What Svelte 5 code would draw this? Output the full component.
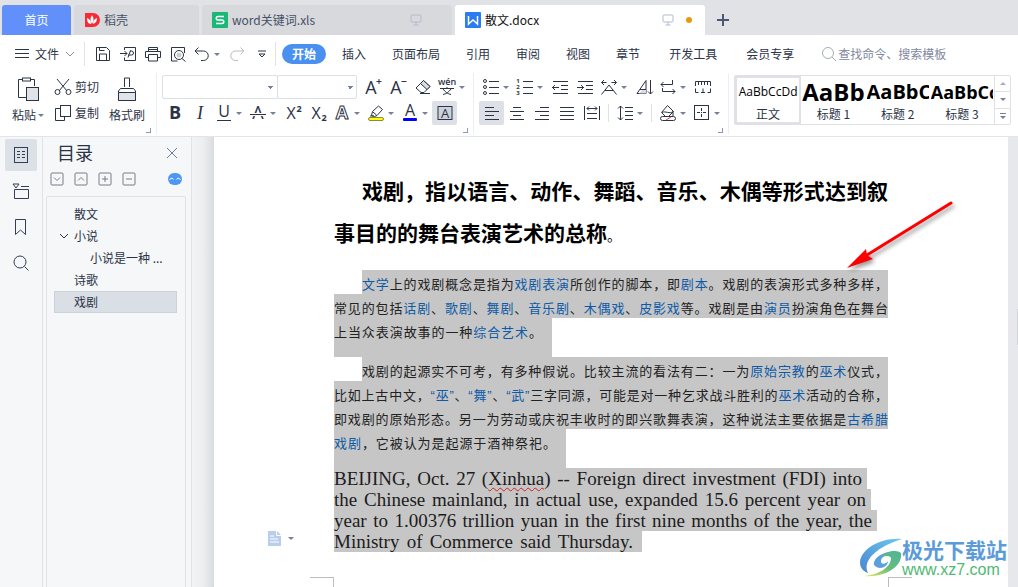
<script>
  const menus = ["插入", "页面布局", "引用", "审阅", "视图", "章节"];
  const letter = (s, size, x = 9, y = 15, extra = "") =>
    `<text x="${x}" y="${y}" font-size="${size}" text-anchor="middle" fill="currentColor" stroke="none" ${extra}>${s}</text>`;

  // 18x18 glyphs, stroked with currentColor unless stated otherwise
  const icons = {
    save: `<path d="M2.5 2.5h10l3 3v10h-13zM5.5 15v-6h7v6M5.5 2.5v3h5"/>`,
    exportPdf: `<path d="M5.5 5V2.5h11v13h-11v-3M1 8.5h7M5.5 6l2.500 2.500-2.500 2.500M9 12.500l2.500-7M11 6h1.500a2 2 0 0 1 0 4H9"/>`,
    print: `<path d="M4.500 6V2.500h9V6M4.500 12.500h-3v-6h15v6h-3M4.500 9.500h9v6.500h-9zM4 4.500h10"/>`,
    preview: `<path d="M15.500 8V2.500h-13v13.500h6"/><circle cx="10" cy="10" r="4.500"/><circle cx="10" cy="10" r="2.500" fill="#c9ccd3" stroke="none"/><path d="M13 13.500l3.500 3"/>`,
    undo: `<path d="M5.500 2.500l-3.500 3.500 3.500 3.500M2 6h8.500a4.500 4.500 0 0 1 0 9.500H8"/>`,
    redo: `<path d="M12.500 2.500l3.500 3.500-3.500 3.500M16 6H7.500a4.500 4.500 0 0 0 0 9.500H10"/>`,
    grow: letter("A", 18, 7, 16) + `<path d="M12.500 3.500h5M15 1v5"/>`,
    shrink: letter("A", 18, 7, 16) + `<path d="M12.500 3.500h5"/>`,
    eraser: `<path d="M9.500 2.500l6.500 6-6 6H7L2 10z"/><path d="M9.500 2.500l6.500 6-3 3-6.500-6z" fill="#d9dce2"/><path d="M6 15.500h10"/>`,
    pinyin: letter("wén", 9, 9, 7, 'font-weight="600"') + `<path d="M2 10.500h14M9 9v1.500M5 11c2 3 5 5 8 5.500M13 11c-2 3-5 5-8 5.500"/>`,
    bold: letter("B", 18, 9, 15, 'font-weight="bold"'),
    italic: letter("I", 18, 9, 15, `font-style="italic" font-family="Liberation Serif"`),
    underline: letter("U", 16, 9, 13) + `<path d="M2 16.500h14"/>`,
    strike: letter("A", 18, 9, 15) + `<path d="M1 10.500h16" stroke="#fff" stroke-width="3"/><path d="M1 10.500h16"/>`,
    sup: letter("X", 16, 7, 15) + letter("2", 9, 15, 8, 'font-weight="bold"'),
    sub: letter("X", 16, 7, 15) + letter("2", 9, 15, 17, 'font-weight="bold"'),
    outline: `<text x="9" y="15" font-size="18" font-weight="bold" text-anchor="middle" fill="#fff">A</text>`,
    highlight: `<path d="M4.500 11.500l1-4 6-5.500 4 3.500-5.500 6-2.500 1zM6 8l3.500 3M3 12h4"/><rect x="1.500" y="13.500" width="15" height="3" rx="1.500" fill="#ff0" stroke="#8a8a3a"/>`,
    fontColor: letter("A", 16, 9, 12) + `<rect x="2" y="14" width="14" height="3" rx="1" fill="#00f" stroke="none"/>`,
    boxedA: `<rect x="2" y="2.500" width="14" height="13" fill="#ccd1da"/>` + letter("A", 13, 9, 14),
    bullets: `<circle cx="3" cy="3" r="1.500"/><circle cx="3" cy="9" r="1.500"/><circle cx="3" cy="15" r="1.500"/><path d="M7 3.500h10M7 9.500h10M7 15.500h10"/>`,
    numbers: letter("1", 6, 2, 5, 'font-weight="bold"') + letter("2", 6, 2, 11, 'font-weight="bold"') + letter("3", 6, 2, 17, 'font-weight="bold"') + `<path d="M7 3.500h10M7 9.500h10M7 15.500h10"/>`,
    outdent: `<path d="M2 3.500h15M10 7.500h7M10 11.500h7M2 15.500h15M1 9.500h7M4 7l-2.500 2.500L4 12"/>`,
    indent: `<path d="M2 3.500h15M10 7.500h7M10 11.500h7M2 15.500h15M1 9.500h7M5 7l2.500 2.500L5 12"/>`,
    stretch: `<path d="M1.500 4.500h5M4 2L1.500 4.500 4 7M11.500 4.500h5M14 2l2.500 2.500L14 7M1.500 16.500L9 7l7.500 9.500M5 12.500h8"/>`,
    textDir: `<path d="M2 15.500h9v-13zM5 11.500h6"/><path d="M7 12h4v3.500H4z" fill="#d9dce2" stroke="none"/><path d="M15.500 2v14M13 13.500l2.500 2.500 2.500-2.500"/>`,
    wrap: `<path d="M13.500 2v4.500H2M4.500 4L2 6.500 4.500 9M3.500 10v3.500H16M13.500 11l2.500 2.500-2.500 2.500"/>`,
    ruler: `<path d="M1.500 8V3.500h15V8M4.500 4v3M7.500 4v3M10.500 4v3M13.500 4v3M1.500 10.500v4h3M16.500 10.500v4h-3M9 10.500v4M7 14.500h4"/>`,
    left: `<path d="M2 3.500h9M2 7.500h14M2 11.500h9M2 15.500h14"/>`,
    center: `<path d="M5 3.500h8M2 7.500h14M5 11.500h8M2 15.500h14"/>`,
    right: `<path d="M7 3.500h9M2 7.500h14M7 11.500h9M2 15.500h14"/>`,
    justify: `<path d="M2 3.500h14M2 7.500h14M2 11.500h14M2 15.500h14"/>`,
    distribute: `<path d="M1.500 2v14M16.500 2v14M4 4.500h10M6 2.500L4 4.500l2 2M12 2.500l2 2-2 2M4 9.500h10M4 14.500h10"/>`,
    spacing: `<path d="M4.500 2v14M2 4.500L4.500 2 7 4.500M2 13.500L4.500 16 7 13.500M9 3.500h8M9 7.500h8M9 11.500h8M9 15.500h8"/>`,
    fill: `<path d="M8.500 1.500l6 6-5 5h-3l-4-4zM3 8.500c3-2 8 2 11-1v5"/><rect x="1.500" y="12.500" width="15" height="4" rx="2" fill="#fff"/><path d="M7 16l5-3" stroke="#e05050"/>`,
    border: `<rect x="1.500" y="1.500" width="14" height="14"/><path d="M8.500 4v3M8.500 8v1M8.500 10v3M4 8.500h3M10 8.500h3"/>`
  };

  const fontTop = [{ n: "grow" }, { n: "shrink" }, { n: "eraser" }, { n: "pinyin", drop: true }];
  const fontBottom = [
    { n: "bold" }, { n: "italic" }, { n: "underline", drop: true }, { n: "strike", drop: true },
    { n: "sup" }, { n: "sub" }, { n: "outline", drop: true }, { n: "highlight", drop: true },
    { n: "fontColor", drop: true }, { n: "boxedA", on: true }
  ];
  const paraTop = [
    { n: "bullets", drop: true }, { n: "numbers", drop: true }, { n: "outdent" }, { n: "indent" },
    { n: "stretch", drop: true }, { n: "textDir" }, { n: "wrap", drop: true }, { n: "ruler" }
  ];
  const aligns = [{ n: "left", on: true }, { n: "center" }, { n: "right" }, { n: "justify" }, { n: "distribute" }];

  const styles = [
    { name: "正文", cls: "s0", sample: "AaBbCcDd" },
    { name: "标题 1", cls: "s1", sample: "AaBb" },
    { name: "标题 2", cls: "s2", sample: "AaBbC" },
    { name: "标题 3", cls: "s3", sample: "AaBbCc" }
  ];

  const tree = [
    { t: "散文" },
    { t: "小说", open: true },
    { t: "小说是一种 ...", sub: true },
    { t: "诗歌" },
    { t: "戏剧", sel: true }
  ];

  // [..] marks a link inside a line; w is the width of a line that does not fill the column
  const paras = [
    [
      { s: "[文学]上的戏剧概念是指为[戏剧表演]所创作的脚本，即[剧本]。戏剧的表演形式多种多样，" },
      { s: "常见的包括[话剧]、[歌剧]、[舞剧]、[音乐剧]、[木偶戏]、[皮影戏]等。戏剧是由[演员]扮演角色在舞台" },
      { s: "上当众表演故事的一种[综合艺术]。", w: 208 }
    ],
    [
      { s: "戏剧的起源实不可考，有多种假说。比较主流的看法有二：一为[原始宗教]的[巫术]仪式，" },
      { s: "比如上古中文，[“巫”]、[“舞”]、[“武”]三字同源，可能是对一种乞求战斗胜利的[巫术]活动的合称，" },
      { s: "即戏剧的原始形态。另一为劳动或庆祝丰收时的即兴歌舞表演，这种说法主要依据是[古希腊]" },
      { s: "[戏剧]，它被认为是起源于酒神祭祀。", w: 222 }
    ]
  ];
  const parts = (s) => s.split(/[\[\]]/).map((t, i) => ({ t, link: i % 2 === 1 })).filter((p) => p.t);

  const english = [
    { s: "BEIJING, Oct. 27 (~Xinhua~) -- Foreign direct investment (FDI) into", w: 528 },
    { s: "the Chinese mainland, in actual use, expanded 15.6 percent year on", w: 532 },
    { s: "year to 1.00376 trillion yuan in the first nine months of the year, the", w: 538 },
    { s: "Ministry of Commerce said Thursday.", w: 299 }
  ];
</script>

{#snippet icon(name)}
  <svg class="ic" viewBox="0 0 18 18" aria-hidden="true">{@html icons[name]}</svg>
{/snippet}

{#snippet tool(t)}
  <button class="tool" class:drop={t.drop} class:on={t.on} aria-label={t.n}>
    <span class="slot">{@render icon(t.n)}</span>
    {#if t.drop}<i class="caret"></i>{/if}
  </button>
{/snippet}

{#snippet monitor()}
  <svg class="mon" viewBox="0 0 12 12" aria-hidden="true"><rect x="1" y="1" width="10" height="7" rx="1" /><path d="M6 8v3M3.500 11h5" /></svg>
{/snippet}

<div class="app">
  <nav class="tabs">
    <button class="tab home">首页</button>
    <button class="tab docer">
      <svg class="logo" viewBox="0 0 16 16"><path d="M1 1h8a7 7 0 0 1 0 14H1z" fill="#fa2a35" /><path d="M8 3c2 3 2 6 0 9-2-3-2-6 0-9zM3 6c3 1 4 3 4 6-3 0-4-3-4-6zM13 6c-3 1-4 3-4 6 3-1 4-3 4-6z" fill="#fff" /></svg>
      稻壳
    </button>
    <button class="tab file">
      <svg class="logo" viewBox="0 0 16 16"><rect width="16" height="16" rx="1" fill="#19b877" /><path d="M12 4.500H6A1.500 1.500 0 0 0 6 8h4a1.500 1.500 0 0 1 0 3.500H4" fill="none" stroke="#fff" stroke-width="1.500" /></svg>
      <span class="name">word关键词.xls</span>{@render monitor()}
    </button>
    <button class="tab file active">
      <svg class="logo" viewBox="0 0 16 16"><rect width="16" height="16" rx="1" fill="#2a7cf0" /><path d="M3.500 4v8l4.500-4 4.500 4V4" fill="none" stroke="#fff" stroke-width="1.500" /></svg>
      <span class="name">散文.docx</span>{@render monitor()}<i class="dot"></i>
    </button>
    <button class="add" aria-label="新建"><svg viewBox="0 0 12 12"><path d="M0 6h12M6 0v12" /></svg></button>
  </nav>

  <div class="menu">
    <button class="filebtn">
      <svg class="burger" viewBox="0 0 14 12"><path d="M0 1.500h14M0 5.500h14M0 9.500h14" /></svg>
      文件
      <svg class="chev" viewBox="0 0 10 6"><path d="M1 1l4 4 4-4" /></svg>
    </button>
    <div class="quick">
      {#each ["save", "exportPdf", "print", "preview"] as n}
        <button class="tool" aria-label={n}>{@render icon(n)}</button>
      {/each}
      {@render tool({ n: "undo", drop: true })}
      <button class="tool redo" aria-label="redo">{@render icon("redo")}</button>
      <button class="tool" aria-label="more"><svg class="chev more" viewBox="0 0 10 8"><path d="M1 1h8M2 4l3 3 3-3z" /></svg></button>
    </div>
    <button class="start">开始</button>
    <div class="items">
      {#each menus as m}<button>{m}</button>{/each}
      <button class="wide">开发工具</button>
      <button class="wide">会员专享</button>
    </div>
    <label class="search">
      <svg viewBox="0 0 16 16"><circle cx="7" cy="7" r="5.500" /><path d="M11 11l4 4" /></svg>
      <input placeholder="查找命令、搜索模板" aria-label="查找命令" />
    </label>
  </div>

  <div class="ribbon">
    <section class="group clip">
      <button class="big paste">
        <svg viewBox="0 0 22 24"><path d="M5 2.500H1.500v18H9M14 2.500h3.500V9" /><rect x="5.500" y="1" width="8" height="3" /><rect x="9.500" y="10.500" width="12" height="13" fill="#e0e3e7" /></svg>
        <span>粘贴<i class="caret"></i></span>
      </button>
      <div class="pair">
        <button><svg class="ic" viewBox="0 0 18 18"><path d="M3 1l10 12M15 1L5 13" /><circle cx="3.500" cy="14" r="2.500" /><circle cx="14.500" cy="14" r="2.500" /></svg>剪切</button>
        <button><svg class="ic" viewBox="0 0 18 18"><path d="M7 4.500H1.500v12h9V13" /><rect x="6.500" y="1.500" width="10" height="11" /></svg>复制</button>
      </div>
      <button class="big brush">
        <svg viewBox="0 0 22 24"><path d="M8.500 10V1h5v9M2.500 23.500V14l2-2.500h13l2 2.500v9.500z" /><path d="M2.500 15.500h17v8h-17z" fill="#e0e3e7" /></svg>
        <span>格式刷</span>
      </button>
      <i class="corner"></i>
    </section>

    <section class="group font">
      <div class="row">
        <select class="family" aria-label="字体"><option></option></select>
        <select class="size" aria-label="字号"><option></option></select>
        {#each fontTop as t}{@render tool(t)}{/each}
      </div>
      <div class="row">{#each fontBottom as t}{@render tool(t)}{/each}</div>
      <i class="corner"></i>
    </section>

    <section class="group para">
      <div class="row">{#each paraTop as t}{@render tool(t)}{/each}</div>
      <div class="row">
        {#each aligns as t}{@render tool(t)}{/each}
        <i class="sep"></i>
        {@render tool({ n: "spacing", drop: true })}
        <i class="sep"></i>
        {@render tool({ n: "fill", drop: true })}
        {@render tool({ n: "border", drop: true })}
      </div>
      <i class="corner"></i>
    </section>

    <section class="gallery">
      {#each styles as s, i}
        <button class="style" class:picked={i === 0}>
          <span class="sample {s.cls}">{s.sample}</span>
          <span class="sname">{s.name}</span>
        </button>
      {/each}
      <div class="scroll">
        <button aria-label="up"><i class="caret up"></i></button>
        <button aria-label="down"><i class="caret"></i></button>
        <button aria-label="all" class="all"><i class="caret"></i></button>
      </div>
    </section>
  </div>

  <div class="body">
    <aside class="rail">
      <button class="on" aria-label="目录"><svg viewBox="0 0 18 18"><rect x="2.500" y="1.500" width="13" height="15" /><path d="M5 5.500h3M10 5.500h3M5 8.500h3M10 8.500h3M5 11.500h3M10 11.500h3" /></svg></button>
      <button aria-label="章节"><svg viewBox="0 0 18 18"><path d="M1 2h6L4 6zM9 4.500h8M2.500 7.500h14v9h-14z" /></svg></button>
      <button aria-label="书签"><svg viewBox="0 0 18 18"><path d="M3.500 1.500h10v15l-5-4.500-5 4.500z" /></svg></button>
      <button aria-label="查找"><svg viewBox="0 0 18 18"><circle cx="8" cy="8" r="6" /><path d="M12.500 12.500l4 4" /></svg></button>
    </aside>

    <aside class="toc">
      <header>
        <h2>目录</h2>
        <button class="close" aria-label="关闭"><svg viewBox="0 0 10 10"><path d="M0 0l10 10M10 0L0 10" /></svg></button>
      </header>
      <div class="tocbar">
        {#each ["M4 5.500l3 3 3-3", "M4 8.500l3-3 3 3", "M4 7h6M7 4v6", "M4 7h6"] as d}
          <button aria-label="层级"><svg viewBox="0 0 14 14"><rect x="1" y="1" width="12" height="12" rx="1" /><path {d} /></svg></button>
        {/each}
        <button class="smart" aria-label="智能识别"><svg viewBox="0 0 14 12"><rect width="14" height="12" rx="6" fill="#4c97f5" /><path d="M1.500 6.500L4 5l1.500 1.500M8.500 6.500L10 5l2.500 1.500" fill="none" stroke="#fff" /></svg></button>
      </div>
      <div class="tree">
        {#each tree as n}
          <button class:sel={n.sel} class:sub={n.sub}>
            {#if n.open}<svg class="chev" viewBox="0 0 10 6"><path d="M1 1l4 4 4-4" /></svg>{/if}{n.t}
          </button>
        {/each}
      </div>
    </aside>

    <div class="gutter"></div>

    <main class="page">
      <h1>
        <span class="line first">戏剧，指以语言、动作、舞蹈、音乐、木偶等形式达到叙</span>
        <span class="line last">事目的的舞台表演艺术的总称<small>。</small></span>
      </h1>

      {#each paras as p}
        <p class="cn">
          {#each p as l, i}
            <span class="line" class:first={i === 0} class:tail={l.w} style:width={l.w ? l.w + "px" : null}>{#each parts(l.s) as q}{#if q.link}<a href="#top">{q.t}</a>{:else}{q.t}{/if}{/each}</span>
          {/each}
        </p>
      {/each}

      <div class="enwrap">
        <button class="opts" aria-label="粘贴选项">
          <svg viewBox="0 0 13 15"><path d="M0 0h9l4 4v11H0z" fill="#b9cdec" /><path d="M8.500 0v4.500H13M2 5h4M2 8h8M2 11h9" fill="none" stroke="#fff" /></svg>
          <i class="caret"></i>
        </button>
        <p class="en">
          {#each english as l}
            <span class="line" style:width={l.w + "px"}>{#each l.s.split("~") as q, i}{#if i === 1}<u>{q}</u>{:else}{q}{/if}{/each}</span>
          {/each}
        </p>
      </div>

      <div class="crops"><i></i><i></i></div>

      <svg class="arrow" viewBox="0 0 120 80" aria-hidden="true">
        <path d="M108 5L24 57" stroke="#f00" stroke-width="3" stroke-linecap="round" />
        <path d="M4 70L23 51l1 6 6 4z" fill="#f00" />
      </svg>

      <div class="mark">
        <svg viewBox="0 0 42 42" aria-hidden="true">
          <defs>
            <linearGradient id="sky" x1="0" y1="1" x2="1" y2="0"><stop offset="0" stop-color="#4a86cf" /><stop offset="1" stop-color="#6cc8f0" /></linearGradient>
            <linearGradient id="leaf" x1="0" y1="1" x2="1" y2="0"><stop offset="0" stop-color="#f0e65a" /><stop offset=".5" stop-color="#63bd7c" /><stop offset="1" stop-color="#4fb49a" /></linearGradient>
          </defs>
          <path d="M42 2C21 0 1 12 0 25c0 6 3 9 8 11-6-13 9-26 34-34z" fill="url(#sky)" />
          <path d="M14 28c-1-9 14-15 23-13-9 0-17 5-16 10 1 3 5 2 7-1 0 6-9 10-14 4z" fill="#5aa0dc" />
          <path d="M41 16c2 14-17 25-37 23 13-1 27-8 27-18-2-3-7-2-10 0 4-7 16-9 20-5z" fill="url(#leaf)" />
        </svg>
        <div><b>极光下载站</b><a href="#top">www.xz7.com</a></div>
      </div>
    </main>
    <div class="edge"><i></i></div>
  </div>
</div>

<style>
  :global(body) { margin: 0; overflow: hidden; }

  .app {
    height: 100vh; display: flex; flex-direction: column; overflow: hidden;
    font: 12px/16px "Noto Sans CJK SC", sans-serif; color: #2b3347; background: #fff;
  }
  button {
    border: 0; padding: 0; margin: 0; background: none; color: inherit; font: inherit;
    display: flex; align-items: center; white-space: nowrap; flex-shrink: 0;
  }
  svg { display: block; fill: none; stroke: currentColor; flex-shrink: 0; }
  .ic { width: 18px; height: 18px; overflow: visible; font-family: "Open Sans", sans-serif; }
  .caret {
    border: 3px solid transparent; border-top-color: #75809b; border-bottom: 0;
    width: 0; height: 0; flex-shrink: 0;
  }
  .caret.up { transform: rotate(180deg); border-top-color: #a7adba; }

  /* tabs */
  .tabs { display: flex; gap: 3px; height: 30px; padding: 5px 2px 0; background: #e1e2e6; flex-shrink: 0; }
  .tab { background: #d8d9dd; border-radius: 3px 3px 0 0; padding: 0 10px; color: #465066; gap: 4px; }
  .tab svg { stroke: none; }
  .home { width: 69px; background: #6190fb; color: #fff; justify-content: center; }
  .docer { width: 125px; }
  .file { width: 250px; }
  .active { background: #fff; color: #111; }
  .logo { width: 16px; height: 16px; }
  .name { flex: 1; text-align: left; }
  .tab .mon { width: 12px; height: 12px; stroke: #b3bbcd; margin-right: 20px; }
  .active .mon { margin-right: 8px; }
  .dot { width: 6px; height: 6px; border-radius: 3px; background: #e79a0d; margin-right: 3px; }
  .add { padding: 0 9px; color: #4b5876; }
  .add svg { width: 12px; height: 12px; stroke-width: 2; }

  /* menu row */
  .menu { display: flex; align-items: center; height: 34px; padding-top: 2px; flex-shrink: 0; }
  .filebtn { padding: 0 9px 0 15px; gap: 6px; height: 24px; border-right: 1px solid #e1e3e8; }
  .burger { width: 14px; height: 12px; }
  .chev { width: 10px; height: 6px; color: #8b93a5; }
  .quick { display: flex; padding: 0 1px 0 5px; height: 24px; border-right: 1px solid #e1e3e8; }
  .quick .redo { color: #b6bac2; }
  .chev.more { height: 8px; color: #2b3347; }
  .start { background: #4a90f0; color: #fff; font-weight: 700; border-radius: 10px; height: 20px; padding: 0 10px; margin-left: 6px; }
  .items { display: flex; gap: 26px; padding-left: 16px; }
  .items .wide { margin-left: 3px; }
  .search { display: flex; align-items: center; gap: 1px; margin-left: 27px; color: #a3abbb; flex: 1; }
  .search svg { width: 16px; height: 16px; }
  .search input { border: 0; padding: 0; outline: 0; font: inherit; background: none; min-width: 0; width: 120px; }
  .search input::placeholder { color: #7f88a0; opacity: 1; }

  /* ribbon */
  .ribbon { display: flex; height: 61px; padding: 2px 0; border-bottom: 1px solid #e2e4e7; flex-shrink: 0; }
  .group { position: relative; flex-shrink: 0; border-right: 1px solid #eceef1; box-sizing: border-box; padding-top: 2px; }
  .corner { position: absolute; right: 5px; bottom: 1px; width: 4px; height: 4px; border: 1px solid #8e98b0; border-width: 0 1px 1px 0; }
  .row { display: flex; height: 24px; margin-bottom: 2px; align-items: center; }
  .tool { width: 25px; height: 24px; justify-content: center; border-radius: 2px; }
  .tool .slot { width: 24px; display: flex; justify-content: center; }
  .tool.drop { width: 34px; justify-content: flex-start; }
  .tool.on { background: #dde1e7; }

  .clip { display: flex; width: 157px; padding-left: 12px; }
  .big { flex-direction: column; height: 48px; justify-content: space-between; }
  .big svg { width: 22px; height: 24px; margin-top: 2px; }
  .big span { display: flex; align-items: center; gap: 2px; }
  .pair { display: flex; flex-direction: column; gap: 2px; margin: 0 10px; }
  .pair button { height: 24px; gap: 3px; }

  .font { width: 317px; padding-left: 5px; }
  select {
    appearance: none; height: 24px; border: 1px solid #dcdfe4; border-radius: 2px; box-sizing: border-box;
    font: inherit; outline: 0; background-color: #fff;
    background-image: linear-gradient(to bottom left, #75809b 50%, transparent 50%), linear-gradient(to bottom right, #75809b 50%, transparent 50%);
    background-size: 3px 3px; background-repeat: no-repeat;
    background-position: right 6px center, right 3px center;
  }
  .family { width: 116px; }
  .size { width: 80px; margin: 0 3px 0 -1px; }
  .para { width: 255px; padding-left: 5px; }
  .sep { width: 1px; height: 18px; background: #dfe1e6; margin: 0 4px; }

  .gallery { display: flex; flex: 1; min-width: 0; margin: 2px 7px 0 5px; height: 50px; border: 1px solid #dfe1e6; border-radius: 2px; box-sizing: border-box; }
  .style { flex: 1 1 0; min-width: 0; flex-direction: column; overflow: hidden; box-sizing: border-box; border: 2px solid transparent; border-width: 2px 1px; }
  .style.picked { border: 2px solid #dfe1e6; }
  .sample { height: 28px; line-height: 28px; font-family: "Open Sans", sans-serif; color: #000; overflow: hidden; width: 100%; text-align: left; }
  .s0 { font-size: 12px; text-align: center; }
  .s1 { font-size: 24px; font-weight: 700; }
  .s2 { font-size: 20px; font-weight: 700; }
  .s3 { font-size: 18px; font-weight: 700; }
  .scroll { width: 15px; border-left: 1px solid #dfe1e6; display: flex; flex-direction: column; flex-shrink: 0; }
  .scroll button { flex: 1; justify-content: center; border-bottom: 1px solid #dfe1e6; }
  .scroll button:last-child { border: 0; flex-direction: column; gap: 2px; }
  .all::before { content: ""; width: 6px; border-top: 1px solid #75809b; }

  /* side panels */
  .body { flex: 1; display: flex; min-height: 0; }
  .rail { width: 43px; box-sizing: border-box; padding: 2px 5px; background: #f5f7f9; border-right: 1px solid #dfe2e7; display: flex; flex-direction: column; gap: 4px; color: #333f58; }
  .rail button { width: 32px; height: 32px; justify-content: center; border-radius: 2px; }
  .rail .on { background: #dce0e7; }
  .rail svg { width: 18px; height: 18px; }

  .toc { width: 149px; box-sizing: border-box; padding: 0 5px 0 3px; background: #f5f7f9; border-right: 1px solid #dfe2e7; display: flex; flex-direction: column; }
  .toc header { display: flex; justify-content: space-between; height: 32px; padding: 0 9px 0 11px; }
  h2 { margin: 0; font-size: 18px; line-height: 30px; font-weight: 400; }
  .close svg { width: 10px; height: 10px; color: #6f7c99; }
  .tocbar { display: flex; gap: 10px; padding: 2px 4px; height: 16px; margin-bottom: 7px; color: #787d87; }
  .tocbar svg { width: 14px; height: 14px; }
  .smart { margin-left: auto; }
  .smart svg { stroke: none; height: 12px; }
  .tree { flex: 1; border: 1px solid #dfe2e7; border-bottom: 0; border-radius: 2px 2px 0 0; padding: 6px 8px 0 7px; }
  .tree button { width: 100%; height: 22px; padding-left: 20px; box-sizing: border-box; }
  .tree .sub { padding-left: 36px; }
  .tree .chev { margin: 0 5px 0 -15px; color: #2b3347; }
  .tree .sel { background: #dadee5; border: 1px solid #ccd2dc; padding-left: 19px; }

  .gutter { width: 22px; background: linear-gradient(90deg, #f2f3f5, #eceef0 50%, #d9dbde); }
  .edge { width: 10px; background: #e6e8ec; display: flex; justify-content: flex-end; }
  .edge i { width: 1px; height: 36px; background: #cfd3da; margin-top: 172px; }

  /* document */
  .page { flex: 1; min-width: 0; position: relative; background: #fff; padding: 32px 120px 0; overflow: hidden; color: #222; }
  .line { display: block; text-align-last: justify; white-space: nowrap; }
  .first { margin-left: 28px; }
  h1 { margin: 0 0 14px; font-size: 21px; line-height: 42px; font-weight: 700; color: #000; }
  h1 .last { text-align-last: left; }
  h1 small { font-size: 14px; font-weight: 400; }
  .cn { margin: 0; font: 13px/18px "Liberation Sans", "Noto Sans CJK SC", sans-serif; }
  .cn .line { background: #c6c6c6; padding-top: 6px; }
  .cn .tail { padding: 6px 10px 15px 0; }
  .cn a { color: #0d5aa7; text-decoration: none; }
  .enwrap { position: relative; }
  .en { margin: 0; font: 19px/21px "Liberation Serif", serif; color: #1c1c1c; }
  .en .line { background: #c6c6c6; padding-right: 5px; }
  .en .line:last-child { padding-right: 9px; }
  .en u { text-decoration: underline wavy #d02020 1px; text-underline-offset: 2px; }
  .opts { position: absolute; left: -66px; bottom: 6px; gap: 7px; }
  .opts svg { width: 13px; height: 15px; stroke: none; }
  .crops { display: flex; justify-content: space-between; margin: 25px -24px 0; }
  .crops i { width: 23px; height: 20px; border: 1px solid #bdbdbd; border-width: 1px 1px 0 0; }
  .crops i:last-child { border-width: 1px 0 0 1px; }

  .arrow { position: absolute; left: 629px; top: 61px; width: 120px; height: 80px; stroke: none; filter: drop-shadow(2px 3px 2px rgba(0, 0, 0, .4)); }
  .mark { position: absolute; right: 1px; bottom: 8px; display: flex; align-items: center; }
  .mark svg { width: 42px; height: 42px; stroke: none; }
  .mark b { display: block; font-size: 21px; line-height: 24px; color: #5b9bd9; }
  .mark a { display: block; font: 16px/18px "Liberation Sans", sans-serif; color: #4fb873; text-decoration: none; -webkit-text-stroke: 0; }
</style>
